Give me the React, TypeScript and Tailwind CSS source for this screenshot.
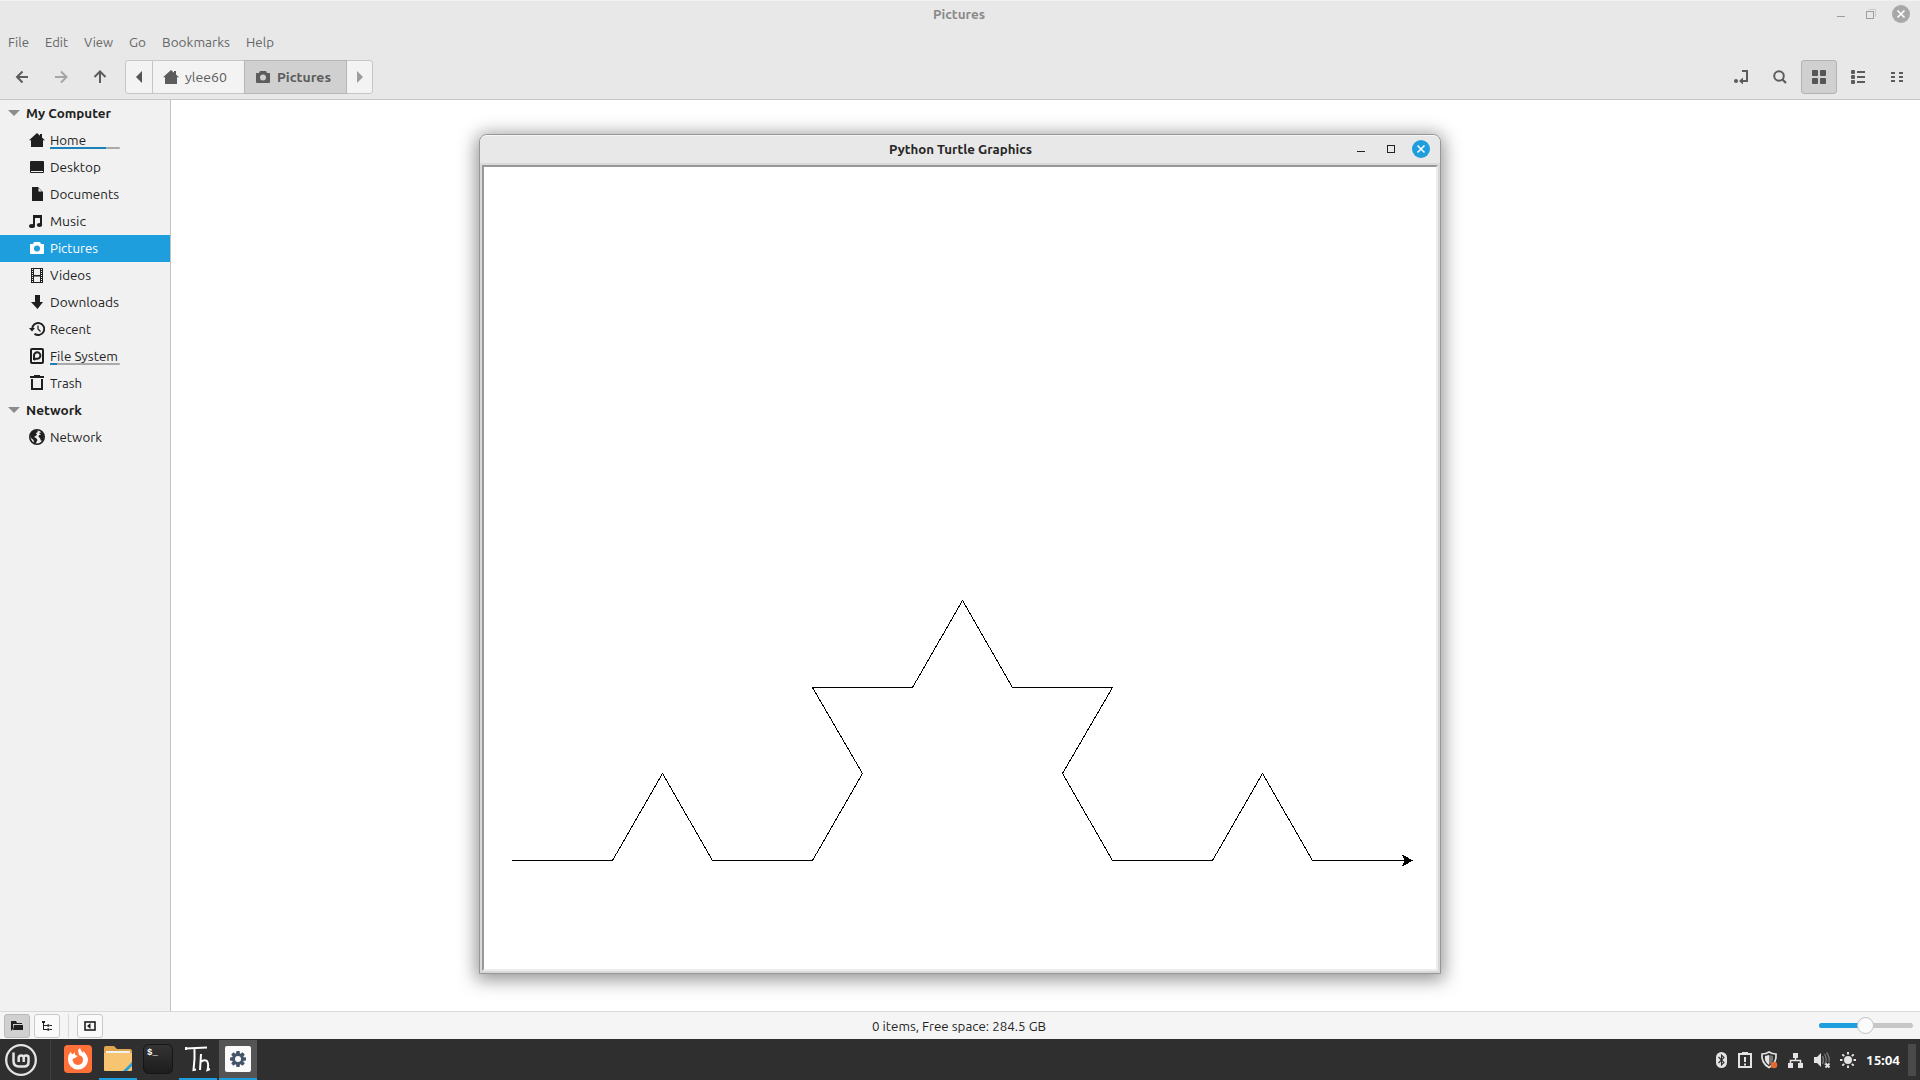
import React, { useLayoutEffect, useRef } from "react";

type TProps = { w: number; children: string };

// Text run scaled horizontally so that it takes exactly w pixels
function T({ w, children }: TProps) {
  const ref = useRef<HTMLSpanElement>(null);
  useLayoutEffect(() => {
    const el = ref.current;
    if (el && el.offsetWidth) {
      el.style.transform = "none";
      el.style.transform = `scaleX(${w / el.getBoundingClientRect().width})`;
    }
  }, [w, children]);
  return (
    <span className="block h-5 shrink-0" style={{ width: w }}>
      <span ref={ref} className="inline-block origin-left leading-5 whitespace-nowrap">{children}</span>
    </span>
  );
}

const home = "M8 1 L16 8.3 H14 V15 H2 V8.3 H0 Z M11 2 h2 v4 h-2z";
const camera = "M5 2 L4 4 H1.500 Q1 4 1 5 V13 Q1 14 2 14 H14 Q15 14 15 13 V5 Q15 4 14.500 4 H12 L11 2 Z M8 5.500 A3 3 0 1 1 8 11.500 A3 3 0 1 1 8 5.500 Z";

function Icon({ name }: { name: string }) {
  return (
    <svg width={16} height={16} viewBox="0 0 16 16" className="block shrink-0" fill="currentColor" stroke="none">
      {name === "Home" && <path d={home} />}
      {name === "Pictures" && <path fillRule="evenodd" d={camera} />}
      {name === "Desktop" && <path fillRule="evenodd" d="M2 2H14Q15 2 15 3V13Q15 14 14 14H2Q1 14 1 13V3Q1 2 2 2Z M2 12V13H14V12Z" />}
      {name === "Documents" && <path fillRule="evenodd" d="M3 1H9L14 6V15H3Z M9.500 2V5.500H13Z" />}
      {name === "Music" && (
        <g>
          <path d="M4 2H13V12H11V5H6V13H4Z" />
          <ellipse cx={3} cy={13} rx={3} ry={2} />
          <ellipse cx={10.500} cy={12} rx={2.700} ry={2} />
        </g>
      )}
      {name === "Videos" && (
        <g>
          <path fillRule="evenodd" d="M2 1H14V16H2Z M5 2V8H11V2Z M5 9.500V15H11V9.500Z" />
          <path d="M3.500 2V16M12.500 2V16" fill="none" stroke="#f1f1f1" strokeWidth={1} strokeDasharray="1 1" />
        </g>
      )}
      {name === "Downloads" && <path d="M6 1H11V8H14L8.500 15L2 8H6Z" />}
      {name === "Recent" && (
        <g fill="none" stroke="currentColor">
          <path d="M3.200 8A6 6 0 1 1 5.500 12.700" strokeWidth={1.900} />
          <path d="M9 4.500V8L11.500 10.500" strokeWidth={1.200} />
          <path d="M0 7H6L3 10.500Z" fill="currentColor" stroke="none" />
        </g>
      )}
      {name === "File System" && (
        <g fill="none" stroke="currentColor" strokeWidth={2}>
          <rect x={2} y={1} width={12} height={14} rx={1} />
          <path d="M5 12V7.500A3.200 3.200 0 1 1 8 10.700H6.500L5 12" />
          <circle cx={8} cy={7.500} r={1} fill="#f1f1f1" stroke="none" />
        </g>
      )}
      {name === "Trash" && <path fillRule="evenodd" d="M5 0H11V1H15V3H1V1H5Z M2 4H14V15H2Z M4 4V13H12V4Z" />}
      {name === "Network" && (
        <g>
          <circle cx={8} cy={8} r={7.200} fill="none" stroke="currentColor" strokeWidth={1.600} />
          <path d="M1 5L4 1.500L8 1L9 3L7 4L8 6L5 8L7 9L8.500 11L6.500 15L5 14L4.500 11L2 9Z M10 4L13 3L15 7L14 11L12 12L11 9L9.500 8L10 6L12 6Z" />
        </g>
      )}
    </svg>
  );
}

type Place = { name: string; w: number; used?: number };
const places: Place[] = [
  { name: "Home", w: 36, used: 56 },
  { name: "Desktop", w: 51 },
  { name: "Documents", w: 69 },
  { name: "Music", w: 36 },
  { name: "Pictures", w: 48 },
  { name: "Videos", w: 41 },
  { name: "Downloads", w: 69 },
  { name: "Recent", w: 41 },
  { name: "File System", w: 68, used: 7 },
  { name: "Trash", w: 32 },
];

function Row({ p }: { p: Place }) {
  const sel = p.name === "Pictures";
  return (
    <div className={"flex h-[27px] items-center pb-px pl-[29px] " + (sel ? "bg-[#1f9ede] text-white" : "text-[#1f1f1f]")}>
      <Icon name={p.name} />
      <div className="relative ml-[5px]">
        <T w={p.w}>{p.name}</T>
        {p.used !== undefined && (
          <div className="absolute top-[17px] left-0 h-0.5 w-[70px] rounded-full bg-[#aaaaaa]">
            <div className="h-full bg-[#1a82b8]" style={{ width: p.used }} />
          </div>
        )}
      </div>
    </div>
  );
}

function Heading({ name, w }: { name: string; w: number }) {
  return (
    <div className="flex h-[27px] items-center pb-px pl-2 font-bold text-[#1f1f1f]">
      <svg width={12} height={6} className="mr-[6px] block"><path d="M0 0H12L6 6Z" fill="#8c8c8c" /></svg>
      <T w={w}>{name}</T>
    </div>
  );
}

const menus: [string, number, number][] = [
  ["File", 21, 16], ["Edit", 23, 16], ["View", 29, 16], ["Go", 17, 16], ["Bookmarks", 68, 16], ["Help", 28, 0],
];

function Header() {
  return (
    <header className="flex h-[100px] flex-col border-t border-b border-t-[#f2f2f2] border-b-[#c6c6c6] bg-[#e8e8e8] text-[#666666]">
      <div className="relative flex h-[27px] items-center justify-center pr-[2px] pb-px font-semibold text-[#8a8a8a]">
        <T w={52}>Pictures</T>
        <svg width={83} height={22} className="absolute top-[2px] right-0" fill="none">
          <path d="M0 13.500H8" stroke="#9d9d9d" />
          <path d="M31.500 6.500H38.500V14" stroke="#cacaca" />
          <rect x={29.500} y={8.500} width={7} height={7} stroke="#9d9d9d" />
          <circle cx={64} cy={11} r={9} fill="#a8a8a8" />
          <path d="M60.500 7.500L67.500 14.500M67.500 7.500L60.500 14.500" stroke="#fff" strokeWidth={1.700} />
        </svg>
      </div>
      <div className="flex h-[28px] items-center pl-2">
        {menus.map(([m, w, g]) => (
          <div key={m} className="flex" style={{ marginRight: g }}><T w={w}>{m}</T></div>
        ))}
      </div>
      <div className="flex h-[42px] items-center text-[#5c5c5c]">
        <svg width={125} height={34} fill="none" stroke="#5c5c5c" strokeWidth={2} className="shrink-0">
          <path d="M28 17H17.500M22.500 11.500L17 17L22.500 22.500" />
          <path d="M55 17H66M61 11.500L66.500 17L61 22.500" stroke="#a5a5a5" />
          <path d="M100 23V12M94.500 17L100 11.500L105.500 17" />
        </svg>
        <div className="flex h-[34px] w-[248px] rounded-[3px] border border-[#c6c6c6] bg-[#f3f3f3]">
          <div className="flex w-[27px] items-center justify-center border-r border-[#c6c6c6]">
            <svg width={6} height={12}><path d="M6 0V12L0 6Z" fill="#555" /></svg>
          </div>
          <div className="flex w-[91px] items-center pl-[10px]"><Icon name="Home" /><div className="ml-[6px]"><T w={42}>ylee60</T></div></div>
          <div className="-my-px flex w-[103px] items-center border border-[#b5b5b5] bg-[#d0d0d0] pl-[10px] font-bold">
            <Icon name="Pictures" /><div className="ml-[6px]"><T w={54}>Pictures</T></div>
          </div>
          <div className="flex flex-1 items-center justify-center"><svg width={6} height={12}><path d="M0 0V12L6 6Z" fill="#9c9c9c" /></svg></div>
        </div>
        <div className="ml-auto flex items-center">
          <svg width={14} height={14} className="mr-[25px]" fill="none">
            <circle cx={2} cy={11} r={2} fill="#5c5c5c" /><path d="M8 1H13V11H7" stroke="#5c5c5c" strokeWidth={2} /><path d="M5 11L9 7.500V14.500Z" fill="#5c5c5c" />
          </svg>
          <svg width={14} height={14} className="mr-[14px]" fill="none" stroke="#5c5c5c">
            <circle cx={6} cy={6} r={4.800} strokeWidth={2} /><path d="M9.500 9.500L13 13" strokeWidth={2.200} />
          </svg>
          <div className="mr-[14px] flex h-[34px] w-[36px] items-center justify-center rounded-[3px] border border-[#b3b3b3] bg-[#d0d0d0]">
            <svg width={14} height={14} fill="#555"><rect width={6} height={6} rx={1} /><rect x={8} width={6} height={6} rx={1} /><rect y={8} width={6} height={6} rx={1} /><rect x={8} y={8} width={6} height={6} rx={1} /></svg>
          </div>
          <svg width={14} height={14} className="mr-[26px]" fill="#5c5c5c">
            {[0, 5, 10].map((y) => <g key={y}><rect y={y} width={4} height={4} rx={1} /><rect x={6} y={y + 1} width={8} height={2} /></g>)}
          </svg>
          <svg width={12} height={10} className="mr-[17px]" fill="#5c5c5c">
            {[0, 4, 8].map((y) => <g key={y}><rect y={y} width={4} height={2} /><rect x={8} y={y} width={4} height={2} /></g>)}
          </svg>
        </div>
      </div>
    </header>
  );
}

const curve =
  "32.5,694 133,694 183,607 233,694 333,694 383,607 333,521 433,521 483,434 533,521 633,521 583,607 633,694 733,694 783,607 833,694 933,694";

function TurtleWindow() {
  return (
    <div className="absolute top-[134px] left-[479px] flex h-[840px] w-[962px] flex-col rounded-t-[8px] border border-[#979797] bg-[#d9d9d9] shadow-[0_3px_18px_3px_rgba(0,0,0,0.42)]">
      <div className="relative flex h-[28px] items-center justify-center rounded-t-[7px] border-t border-[#f6f6f6] bg-[#e8e8e8] pb-px font-semibold text-[#262626]">
        <T w={143}>Python Turtle Graphics</T>
        <svg width={84} height={22} className="absolute top-[2px] right-0" fill="none">
          <path d="M1 13.500H9" stroke="#222" />
          <rect x={31.500} y={7.500} width={7} height={7} stroke="#222" />
          <circle cx={65} cy={11} r={9} fill="#1f9ede" />
          <path d="M61.500 7.500L68.500 14.500M68.500 7.500L61.500 14.500" stroke="#fff" strokeWidth={1.500} />
        </svg>
      </div>
      <div className="mx-[2px] mt-[2px] mb-[2px] flex-1 border-2 border-t-[#979797] border-r-[#ececec] border-b-[#ececec] border-l-[#979797] bg-white">
        <svg width={952} height={802} viewBox="5 1 952 802" className="block" shapeRendering="crispEdges">
          <polyline points={curve} transform="translate(0.5 0.5)" fill="none" stroke="#000" strokeWidth={1} strokeLinejoin="bevel" />
          <path d="M933 694.500L924 689.500L926 694.500L924 699.500Z" stroke="#000" />
        </svg>
      </div>
    </div>
  );
}

function StatusBar() {
  const btn = "flex h-[24px] w-[26px] items-center justify-center rounded-[3px] border ";
  return (
    <div className="relative flex h-[28px] items-center border-t border-[#d9d9d9] bg-[#f5f5f5] pl-1 text-[#1f1f1f]">
      <div className={btn + "border-[#b9b9b9] bg-[#d0d0d0]"}>
        <svg width={12} height={10} fill="#1f1f1f"><path d="M0 0H5L6 2H11V3H2V8L0 10Z" /><path d="M3 4H12V9H2Z" /></svg>
      </div>
      <div className={btn + "ml-1 border-[#c9c9c9] bg-[#fafafa]"}>
        <svg width={10} height={10} fill="#1f1f1f"><path d="M0 0H3V2H2V4H5V5H2V8H5V9H1V2H0Z" /><circle cx={6.300} cy={4.500} r={1.300} /><circle cx={6.300} cy={8.500} r={1.300} /><path d="M8 4H10V5H8zM8 8H10V9H8z" /></svg>
      </div>
      <div className="mx-2 h-[24px] w-px bg-[#d8d8d8]" />
      <div className={btn + "border-[#c9c9c9] bg-[#fafafa]"}>
        <svg width={12} height={10} fill="none"><rect x={1} y={1} width={10} height={8} stroke="#1f1f1f" strokeWidth={1.600} /><path d="M6.500 2V8L3 5Z" fill="#1f1f1f" /></svg>
      </div>
      <div className="absolute inset-x-0 top-1 flex justify-center pr-[3px]"><T w={174}>0 items, Free space: 284.5 GB</T></div>
      <div className="relative mr-[7px] ml-auto flex h-[5px] w-[94px] rounded-full bg-[#c6c6c6]">
        <div className="h-full w-[46px] rounded-l-full bg-[#1f9ede]" />
        <div className="absolute -top-[6px] left-[38px] size-[17px] rounded-full border border-[#c0c0c0] bg-[#fbfbfb]" />
      </div>
    </div>
  );
}

function Taskbar() {
  return (
    <footer className="flex h-[41px] items-center bg-[#2f2f2f] text-white">
      <svg width={51} height={41} fill="none" stroke="#e4e4e4" className="border-r border-[#3e3e3e]">
        <circle cx={21} cy={21} r={14.800} strokeWidth={2.300} />
        <path d="M13.500 13.500V22Q13.500 27.500 19 27.500H24Q28.500 27.500 28.500 23V18.500Q28.500 16.500 26.200 16.500Q23.700 16.500 23.700 18.500V23M23.700 19Q23.700 16.500 21.300 16.500Q18.700 16.500 18.700 19V23" strokeWidth={2.500} />
      </svg>
      <svg width={48} height={41}>
        <rect x={13} y={6} width={28} height={28} rx={4} fill="#ff7139" />
        <path d="M27 11Q29 9 29 9Q30 12 32 14L32.500 12Q37 17 37 21A10 10 0 1 1 17 20Q17 15 20 13L21 15.500L24 13.500L24 16L27 17Q25 18 24 19L21.500 20Q21.500 25.500 27 26Q32 25.500 32 20.500Q32 17 28 16Z" fill="#fff" />
      </svg>
      <svg width={38} height={41}>
        <path d="M5 9Q5 7 7 7H15L18 10H31Q33 10 33 12V20H5Z" fill="#dfa54f" />
        <path d="M5 14H33V31Q33 32 32 32H6Q5 32 5 31Z" fill="#f7c571" />
        <path d="M7 12H31V14H7Z" fill="#f1f1f1" />
        <path d="M24 32L33 23V27L28 32Z" fill="#2a9fd8" />
        <rect y={39} width={38} height={2} fill="#1f9ede" />
      </svg>
      <svg width={42} height={41}>
        <defs><linearGradient id="term" x1="0" y1="0" x2="0" y2="1"><stop stopColor="#343434" /><stop offset="1" stopColor="#1c1c1c" /></linearGradient></defs>
        <rect x={6.500} y={5.500} width={29} height={29} rx={5} fill="url(#term)" stroke="#151515" />
        <text x={10} y={16} fontSize={9} fontFamily="Liberation Mono" fontWeight="bold" fill="#fff">$_</text>
      </svg>
      <svg width={38} height={41}>
        <g fill="none" stroke="#fff" strokeWidth={2}>
          <path d="M7 9.500L28 8.500M7 8V11M15.500 10Q16 20 14.500 31L17 30.500" />
          <path d="M22 15L21 31M21.500 23Q25 20 28 22Q30 25 28.500 31L31 30" />
        </g>
        <rect y={39} width={38} height={2} fill="#1f9ede" />
      </svg>
      <svg width={40} height={41}>
        <rect x={2} y={1} width={38} height={38} fill="#555" />
        <rect x={8} y={7} width={26} height={26} rx={2} fill="#fbfbfb" />
        <g transform="translate(21 20)">
          {[0, 45, 90, 135].map((a) => <rect key={a} x={-1.800} y={-8} width={3.600} height={16} rx={0.800} fill="#445469" transform={`rotate(${a})`} />)}
          <circle r={4.500} fill="none" stroke="#445469" strokeWidth={3} /><circle r={3} fill="#fbfbfb" />
        </g>
        <rect x={2} y={39} width={38} height={2} fill="#1f9ede" />
      </svg>
      <div className="ml-auto flex h-[41px] items-center">
        <svg width={154} height={41} fill="none" stroke="#e4e4e4" strokeWidth={1.500}>
          <rect x={4} y={13} width={11} height={16} rx={5.500} fill="#e4e4e4" stroke="none" />
          <path d="M6.500 18L12 23.500L9.500 26V16L12 18.500L6.500 24" stroke="#2f2f2f" strokeWidth={1.100} />
          <path d="M27 15V28H39V15Z" strokeWidth={2} /><path d="M30 13H36V16H30z" fill="#e4e4e4" stroke="none" /><path d="M33 18V23M33 24.500V26.500" strokeWidth={2} />
          <path d="M50 15Q54 15 57 13Q60 15 64 15Q65 24 57 28.500Q49 24 50 15Z" strokeWidth={1.700} /><path d="M57 16L61 17Q62 23 57 26Z" fill="#777" stroke="none" /><path d="M57 16L53 17Q52 23 57 26Z" fill="#e4e4e4" stroke="none" /><circle cx={62} cy={26} r={3.300} fill="#e36a32" stroke="none" />
          <path d="M83.500 18V21M78.500 25V21.500H88.500V25" /><path d="M81 14h5v5h-5z M76 24h5v5h-5z M86 24h5v5h-5z" fill="#e4e4e4" stroke="none" />
          <path d="M102 18H105L109 14V28L105 24H102Z" fill="#e4e4e4" stroke="none" /><path d="M110.500 17Q112.500 21 110.500 25M112.500 15Q116 21 112.500 26M114.500 13.500Q118 18 117 23" stroke="#777" strokeWidth={1.300} /><path d="M113.500 24.500L117.500 28.500M117.500 24.500L113.500 28.500" strokeWidth={1.900} />
          <circle cx={136} cy={21} r={4} fill="#e4e4e4" stroke="none" />
          {[0, 45, 90, 135, 180, 225, 270, 315].map((a) => <path key={a} d="M136 13V15.500" strokeWidth={2} transform={`rotate(${a} 136 21)`} />)}
        </svg>
        <div className="pt-px font-bold"><T w={34}>15:04</T></div>
        <div className="mr-1 ml-2 h-[32px] w-[8px] bg-[#4a4a4a]" />
      </div>
    </footer>
  );
}

export default function App() {
  return (
    <div className="relative flex h-[1080px] w-[1920px] flex-col overflow-hidden bg-white font-['Ubuntu','Noto_Sans',sans-serif] text-[13px] leading-5">
      <Header />
      <main className="flex h-[911px]">
        <nav className="w-[171px] border-r border-[#c0c0c0] bg-[#f1f1f1]">
          <Heading name="My Computer" w={85} />
          {places.map((p) => <Row key={p.name} p={p} />)}
          <Heading name="Network" w={56} />
          <Row p={{ name: "Network", w: 52 }} />
        </nav>
      </main>
      <StatusBar />
      <Taskbar />
      <TurtleWindow />
    </div>
  );
}
